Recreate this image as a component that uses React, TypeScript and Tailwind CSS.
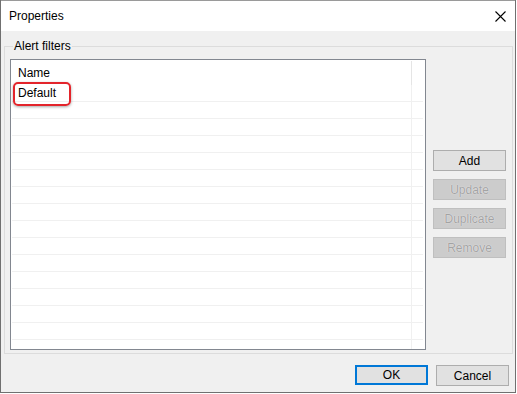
import React from "react";

const font = { fontFamily: '"Liberation Sans", Arial, sans-serif' };

function Btn({ label, disabled, primary }: { label: string; disabled?: boolean; primary?: boolean }) {
  if (primary) {
    return (
      <div className="w-[73px] h-[20px] border-2 border-[#0078d7] bg-[#e1e1e1] flex items-center justify-center text-[12px] text-black">
        {label}
      </div>
    );
  }
  return (
    <div
      className={
        disabled
          ? "w-[73px] h-[21px] border border-[#bfbfbf] bg-[#cccccc] flex items-center justify-center text-[12px] text-[#a3a3a3] [text-shadow:0_0_1px_#ffffff]"
          : "w-[73px] h-[21px] border border-[#adadad] bg-[#e1e1e1] flex items-center justify-center text-[12px] text-black"
      }
    >
      {label}
    </div>
  );
}

export default function App() {
  const rows = Array.from({ length: 15 });
  return (
    <div className="w-[517px] h-[394px] bg-white overflow-hidden" style={font}>
      <div className="w-[516px] h-[393px] border-x border-b border-[#707070] flex flex-col">
        {/* Title bar */}
        <div className="h-[31px] bg-white flex items-center justify-between pl-[8px] pr-[9px] border-t border-[#9a9a9a]">
          <span className="text-[12px] text-black">Properties</span>
          <svg width="11" height="11" viewBox="0 0 11 11">
            <path d="M0.5 0.5 L10.5 10.5 M10.5 0.5 L0.5 10.5" stroke="#000" strokeWidth="1.1" />
          </svg>
        </div>
        {/* Body */}
        <div className="flex-1 bg-[#f0f0f0] flex flex-col">
          {/* Group box */}
          <div className="relative ml-[3px] mt-[15px] w-[509px] h-[308px] border border-[#dcdcdc] pl-[5px] pt-[12px] flex">
            <span className="absolute left-[8px] top-[-8px] px-[1px] bg-[#f0f0f0] text-[12px] leading-[14px] text-black">
              Alert filters
            </span>
            {/* List view */}
            <div className="relative w-[416px] h-[291px] border border-[#828790] bg-white flex flex-col overflow-hidden">
              {/* header */}
              <div className="h-[25px] shrink-0 relative flex items-center pl-[7px] text-[12px] text-black">
                Name
                <div className="absolute left-[400px] top-[1px] h-[24px] w-px bg-[#e5e5e5]" />
              </div>
              {/* rows */}
              <div className="relative flex flex-col pl-[1px] pr-[2px]">
                <div className="h-[16px] flex items-center pl-[6px] text-[12px] text-black">Default</div>
                {rows.map((_, i) => (
                  <div key={i} className="h-[17px] border-t border-[#f0f0f0]" />
                ))}
                <div className="absolute left-[400px] top-0 h-[300px] w-px bg-[#f0f0f0]" />
              </div>
              {/* red annotation */}
              <div className="absolute left-[2px] top-[22px] w-[58px] h-[24px] border-2 border-[#e3242b] rounded-[5px] shadow-[0_1px_3px_rgba(0,0,0,0.35)]" />
            </div>
            {/* side buttons */}
            <div className="ml-[7px] mt-[91px] flex flex-col gap-[8px]">
              <Btn label="Add" />
              <Btn label="Update" disabled />
              <Btn label="Duplicate" disabled />
              <Btn label="Remove" disabled />
            </div>
          </div>
          {/* footer */}
          <div className="flex justify-end gap-[8px] pr-[6px] mt-[11px]">
            <Btn label="OK" primary />
            <Btn label="Cancel" />
          </div>
        </div>
      </div>
    </div>
  );
}
